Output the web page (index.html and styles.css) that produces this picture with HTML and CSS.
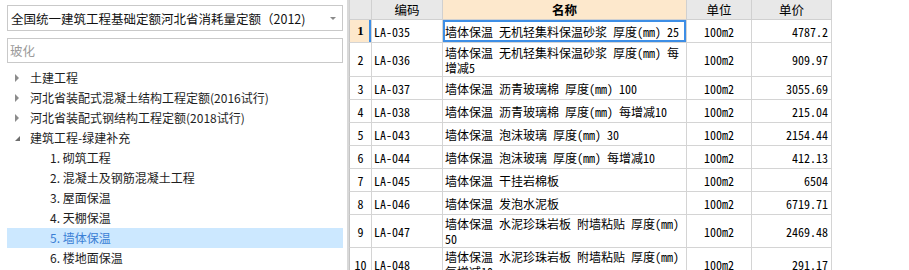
FILE: index.html
```html
<!DOCTYPE html>
<html lang="zh-CN">
<head>
<meta charset="utf-8">
<title>定额</title>
<link rel="stylesheet" href="styles.css">
</head>
<body>
<div class="app">
  <aside class="side">
    <div class="select">
      <span class="select-text">全国统一建筑工程基础定额河北省消耗量定额（2012)</span>
      <span class="caret"></span>
    </div>
    <div class="search">玻化</div>
    <ul class="tree">
      <li class="node"><span class="tri right"></span>土建工程</li>
      <li class="node"><span class="tri right"></span>河北省装配式混凝土结构工程定额(2016试行)</li>
      <li class="node"><span class="tri right"></span>河北省装配式钢结构工程定额(2018试行)</li>
      <li class="node"><span class="tri open"></span>建筑工程-绿建补充</li>
      <li class="leaf">1. 砌筑工程</li>
      <li class="leaf">2. 混凝土及钢筋混凝土工程</li>
      <li class="leaf">3. 屋面保温</li>
      <li class="leaf">4. 天棚保温</li>
      <li class="leaf selected">5. 墙体保温</li>
      <li class="leaf">6. 楼地面保温</li>
    </ul>
  </aside>
  <section class="grid">
    <div class="row head">
      <div class="c num"></div>
      <div class="c code">编码</div>
      <div class="c name hl">名称</div>
      <div class="c unit">单位</div>
      <div class="c price">单价</div>
    </div>
    <div class="row">
      <div class="c num cur">1</div>
      <div class="c code">LA-035</div>
      <div class="c name sel">墙体保温 无机轻集料保温砂浆 厚度(mm) 25</div>
      <div class="c unit">100m2</div>
      <div class="c price">4787.2</div>
    </div>
    <div class="row tall">
      <div class="c num">2</div>
      <div class="c code">LA-036</div>
      <div class="c name">墙体保温 无机轻集料保温砂浆 厚度(mm) 每<br>增减5</div>
      <div class="c unit">100m2</div>
      <div class="c price">909.97</div>
    </div>
    <div class="row">
      <div class="c num">3</div>
      <div class="c code">LA-037</div>
      <div class="c name">墙体保温 沥青玻璃棉 厚度(mm) 100</div>
      <div class="c unit">100m2</div>
      <div class="c price">3055.69</div>
    </div>
    <div class="row">
      <div class="c num">4</div>
      <div class="c code">LA-038</div>
      <div class="c name">墙体保温 沥青玻璃棉 厚度(mm) 每增减10</div>
      <div class="c unit">100m2</div>
      <div class="c price">215.04</div>
    </div>
    <div class="row">
      <div class="c num">5</div>
      <div class="c code">LA-043</div>
      <div class="c name">墙体保温 泡沫玻璃 厚度(mm) 30</div>
      <div class="c unit">100m2</div>
      <div class="c price">2154.44</div>
    </div>
    <div class="row">
      <div class="c num">6</div>
      <div class="c code">LA-044</div>
      <div class="c name">墙体保温 泡沫玻璃 厚度(mm) 每增减10</div>
      <div class="c unit">100m2</div>
      <div class="c price">412.13</div>
    </div>
    <div class="row">
      <div class="c num">7</div>
      <div class="c code">LA-045</div>
      <div class="c name">墙体保温 干挂岩棉板</div>
      <div class="c unit">100m2</div>
      <div class="c price">6504</div>
    </div>
    <div class="row">
      <div class="c num">8</div>
      <div class="c code">LA-046</div>
      <div class="c name">墙体保温 发泡水泥板</div>
      <div class="c unit">100m2</div>
      <div class="c price">6719.71</div>
    </div>
    <div class="row tall2">
      <div class="c num">9</div>
      <div class="c code">LA-047</div>
      <div class="c name">墙体保温 水泥珍珠岩板 附墙粘贴 厚度(mm)<br>50</div>
      <div class="c unit">100m2</div>
      <div class="c price">2469.48</div>
    </div>
    <div class="row tall2">
      <div class="c num">10</div>
      <div class="c code">LA-048</div>
      <div class="c name">墙体保温 水泥珍珠岩板 附墙粘贴 厚度(mm)<br>每增减10</div>
      <div class="c unit">100m2</div>
      <div class="c price">291.17</div>
    </div>
  </section>
</div>
</body>
</html>
```
FILE: styles.css
```css
* { box-sizing: border-box; }
html, body { margin: 0; padding: 0; background: #fff; }
body {
  font-family: "Noto Sans CJK SC", "Microsoft YaHei", sans-serif;
  font-size: 12px;
  color: #1a1a1a;
  width: 909px;
  height: 270px;
  overflow: hidden;
}
.app { display: flex; height: 270px; }

.side {
  width: 349px;
  flex: none;
  padding: 5px 4px 0 7px;
  border-right: 2px solid #d9d9d9;
}
.select {
  height: 26px;
  border: 1px solid #c9c9c9;
  display: flex;
  align-items: center;
  justify-content: space-between;
  padding: 0 6px 0 3px;
  font-size: 12.5px;
  color: #111;
}
.caret {
  width: 0; height: 0;
  border-left: 3px solid transparent;
  border-right: 3px solid transparent;
  border-top: 3px solid #8a8a8a;
}
.search {
  margin-top: 7px;
  height: 25px;
  border: 1px solid #c9c9c9;
  padding-left: 2px;
  line-height: 23px;
  color: #9a9a9a;
  font-size: 12.5px;
}
.tree { list-style: none; margin: 5px 0 0; padding: 0; }
.tree li { height: 20px; line-height: 20px; white-space: nowrap; color: #1e1e1e; }
.node { display: flex; align-items: center; padding-left: 8px; }
.tri { width: 15px; flex: none; position: relative; height: 20px; }
.tri.right::before {
  content: ""; position: absolute; left: 0; top: 6px;
  border-top: 4px solid transparent; border-bottom: 4px solid transparent;
  border-left: 4px solid #8c8c8c;
}
.tri.open::before {
  content: ""; position: absolute; left: 0; top: 8px;
  border-left: 5px solid transparent; border-bottom: 5px solid #6e6e6e;
}
.leaf { padding-left: 43px; }
.tree li.selected { background: #cce8ff; color: #3a7fd5; }

.grid { flex: 1; display: flex; flex-direction: column; font-family: "Noto Sans Mono CJK SC", "Noto Sans CJK SC", monospace; font-size: 12px; color: #000; }
.row {
  display: grid;
  grid-template-columns: 23px 71px 244px 65px 80px;
  height: 23px;
  flex: none;
}
.row.tall { height: 34px; }
.row.tall2 { height: 33px; }
.c {
  border-right: 1px solid #d4d4d4;
  border-bottom: 1px solid #d4d4d4;
  display: flex;
  align-items: center;
  white-space: nowrap;
  overflow: hidden;
}
.num { justify-content: center; border-left: 1px solid #c4c4c4; }
.code { padding-left: 2px; }
.name { padding-left: 2px; line-height: 15px; }
.unit { justify-content: center; }
.price { justify-content: flex-end; padding-right: 3px; }
.head { height: 20px; }
.head .c {
  background: #e8e8e8;
  justify-content: center;
  font-family: "Noto Sans CJK SC", sans-serif;
  font-size: 12.5px;
  border-color: #d0d0d0;
  padding: 0;
}
.head .c.hl { background: #fde8cc; font-weight: bold; }
.num.cur {
  background: #fde8cc;
  font-family: "Liberation Serif", serif;
  font-weight: bold;
  font-size: 13px;
  box-shadow: inset -2px 0 0 #3d8ee6;
}
.name.sel { box-shadow: inset 0 0 0 2px #3d8ee6; }
```
